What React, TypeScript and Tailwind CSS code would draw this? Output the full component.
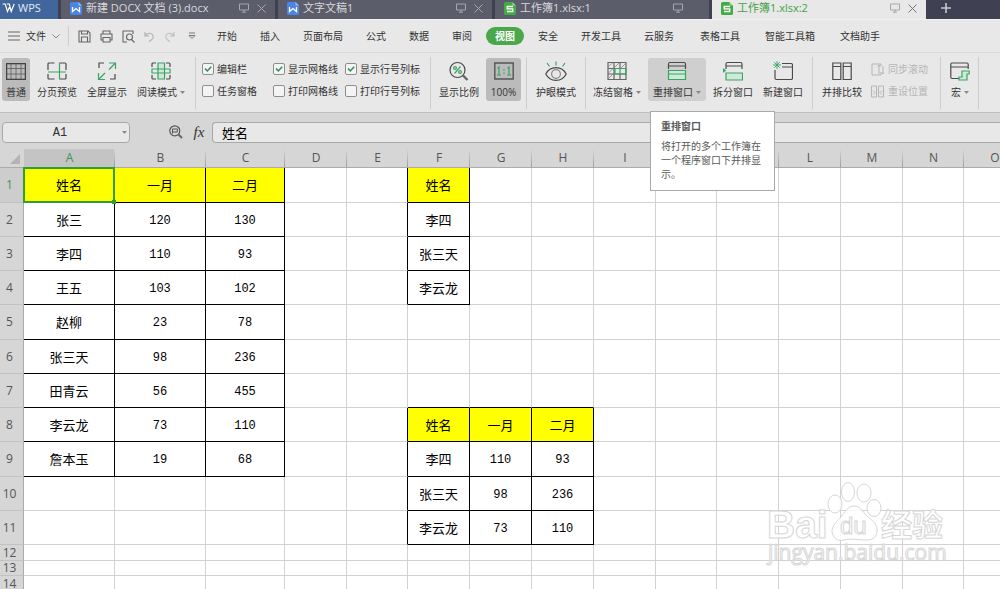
import { useState, ReactNode } from 'react';

const ui = "font-['Open_Sans','Noto_Sans_CJK_SC',sans-serif]";

const docTabs = [
  { title: '新建 DOCX 文档 (3).docx', kind: 'doc', closable: true },
  { title: '文字文稿1', kind: 'doc', closable: true },
  { title: '工作簿1.xlsx:1', kind: 'sheet', closable: false },
  { title: '工作簿1.xlsx:2', kind: 'sheet', closable: true },
];

const menus = ['开始', '插入', '页面布局', '公式', '数据', '审阅', '视图', '安全', '开发工具', '云服务'];
const toolMenus = ['表格工具', '智能工具箱', '文档助手'];

const checks = [
  { label: '编辑栏', on: true },
  { label: '显示网格线', on: true },
  { label: '显示行号列标', on: true },
  { label: '任务窗格', on: false },
  { label: '打印网格线', on: false },
  { label: '打印行号列标', on: false },
];

const cols = [
  { name: 'A', w: 'w-[91px]' },
  { name: 'B', w: 'w-[91px]' },
  { name: 'C', w: 'w-[79px]' },
  { name: 'D', w: 'w-[62px]' },
  { name: 'E', w: 'w-[61px]' },
  { name: 'F', w: 'w-[62px]' },
  { name: 'G', w: 'w-[62px]' },
  { name: 'H', w: 'w-[62px]' },
  { name: 'I', w: 'w-[62px]' },
  { name: 'J', w: 'w-[61px]' },
  { name: 'K', w: 'w-[62px]' },
  { name: 'L', w: 'w-[62px]' },
  { name: 'M', w: 'w-[62px]' },
  { name: 'N', w: 'w-[61px]' },
  { name: 'O', w: 'w-[62px]' },
];

const rows = [
  { h: 'h-[35px]', cells: ['姓名', '一月', '二月', '', '', '姓名'] },
  { h: 'h-[34px]', cells: ['张三', '120', '130', '', '', '李四'] },
  { h: 'h-[34px]', cells: ['李四', '110', '93', '', '', '张三天'] },
  { h: 'h-[34px]', cells: ['王五', '103', '102', '', '', '李云龙'] },
  { h: 'h-[35px]', cells: ['赵柳', '23', '78'] },
  { h: 'h-[34px]', cells: ['张三天', '98', '236'] },
  { h: 'h-[34px]', cells: ['田青云', '56', '455'] },
  { h: 'h-[34px]', cells: ['李云龙', '73', '110', '', '', '姓名', '一月', '二月'] },
  { h: 'h-[35px]', cells: ['詹本玉', '19', '68', '', '', '李四', '110', '93'] },
  { h: 'h-[34px]', cells: ['', '', '', '', '', '张三天', '98', '236'] },
  { h: 'h-[34px]', cells: ['', '', '', '', '', '李云龙', '73', '110'] },
  { h: 'h-[16px]', cells: [] },
  { h: 'h-[15px]', cells: [] },
  { h: 'h-[16px]', cells: [] },
];

const valueAt = (r: number, c: number) => rows[r]?.cells[c] || '';
const isHead = (r: number, c: number) => ['姓名', '一月', '二月'].includes(valueAt(r, c));

function Icon({ children, className = 'w-5 h-5', box = '0 0 20 20' }: { children: ReactNode; className?: string; box?: string }) {
  return (
    <svg className={`shrink-0 ${className}`} viewBox={box} fill="none" stroke="#4a4a4a" strokeWidth="1.2" aria-hidden="true">
      {children}
    </svg>
  );
}

function Caret() {
  return <svg className="w-[5px] h-[3px] shrink-0" viewBox="0 0 5 3" aria-hidden="true"><path d="M0 0h5L2.5 3z" fill="#888" /></svg>;
}

function Monitor() {
  return (
    <Icon className="w-[10px] h-[10px]" box="0 0 10 10">
      <path d="M.5 1h9v6h-9zM5 7v2M3 9.2h4" stroke="#a5a6af" strokeWidth="1" />
    </Icon>
  );
}

function DocIcon({ kind }: { kind: string }) {
  return (
    <svg className="w-3 h-[13px] shrink-0" viewBox="0 0 12 13" fill="none" aria-hidden="true">
      <path d="M1.500 0h7L12 3.500v8A1.500 1.500 0 0 1 10.500 13h-9A1.500 1.500 0 0 1 0 11.500v-10A1.500 1.500 0 0 1 1.500 0z" fill={kind === 'doc' ? '#4a84e6' : '#43ab46'} />
      <path d="M8.500 0 12 3.500H8.500z" fill="#fff" opacity=".45" />
      {kind === 'doc'
        ? <path d="M2.500 5v4.500L6 6.500l3.500 3V5" stroke="#fff" strokeWidth="1.300" />
        : <path d="M9 4.500H3.200v2.300H8.800v2.700H3" stroke="#fff" strokeWidth="1.300" />}
    </svg>
  );
}

function RibbonButton({ label, width, icon, caret, state, children }: { label: string; width: string; icon: ReactNode; caret?: boolean; state?: 'on' | 'hover'; children?: ReactNode }) {
  const bg = state === 'on' ? 'bg-[#bbbbbb]' : state === 'hover' ? 'bg-[#cfcfcf]' : '';
  return (
    <div className={`relative shrink-0 h-[43px] ${width}`}>
      <button type="button" className={`w-full h-full pt-[3px] rounded-[3px] flex flex-col items-center gap-1 ${bg}`}>
        {icon}
        <span className="flex items-center gap-[3px] leading-[14px] whitespace-nowrap">{label}{caret && <Caret />}</span>
      </button>
      {children}
    </div>
  );
}

function Group({ children, className = '' }: { children: ReactNode; className?: string }) {
  return <div className={`flex shrink-0 gap-1 h-[52px] pt-px border-r border-[#cdcdcd] ${className}`}>{children}</div>;
}

function TitleBar() {
  return (
    <div className="flex h-5 border-b border-[#f2f2f2] bg-[#3f4152] text-[11px] leading-4 overflow-hidden">
      <button type="button" className="w-[58px] shrink-0 pl-[2px] pb-[3px] mr-[3px] bg-[#41669c] text-[#e3eaf4] flex items-center gap-[3px]">
        <Icon className="w-[13px] h-[10px]" box="0 0 13 10">
          <path d="M.5 1h2.700L5.500 8.500 8.200 2.500M4.800 1h2.500l1.900 7.500L12.200 1" stroke="#fff" />
        </Icon>
        WPS
      </button>
      {docTabs.map((t, i) => {
        const active = i === 3;
        return (
          <div key={t.title} className={`w-[214px] shrink-0 pl-[9px] pr-[9px] pb-[3px] flex items-center ${active ? 'bg-[#e8e8e8] text-[#43a047]' : 'mr-[3px] bg-[#5c5d6a] text-[#d9d9de]'}`}>
            <DocIcon kind={t.kind} />
            <button type="button" className="flex-1 pl-1 text-left whitespace-nowrap">{t.title}</button>
            <Monitor />
            <span className="w-[9px] ml-2 flex">
              {t.closable && (
                <button type="button" aria-label="关闭">
                  <Icon className="w-[9px] h-[9px]" box="0 0 9 9"><path d="M.5.5l8 8M8.500.5l-8 8" stroke={active ? '#777' : '#a5a6af'} strokeWidth="1" /></Icon>
                </button>
              )}
            </span>
          </div>
        );
      })}
      <button type="button" aria-label="新建" className="ml-[15px] pb-[3px]">
        <Icon className="w-[10px] h-[10px]" box="0 0 10 10"><path d="M5 0v10M0 5h10" stroke="#c6c7ce" strokeWidth="1.600" /></Icon>
      </button>
    </div>
  );
}

function MenuBar({ active, onPick }: { active: string; onPick: (m: string) => void }) {
  return (
    <nav className="flex items-center h-[33px] pl-2 border-b border-[#dadada] whitespace-nowrap">
      <button type="button" className="flex items-center gap-[6px] h-5 pr-2 mr-[9px] border-r border-[#cdcdcd]">
        <Icon className="w-3 h-3" box="0 0 12 12"><path d="M0 2h12M0 6h12M0 10h12" stroke="#666" strokeWidth="1" /></Icon>
        文件
        <Icon className="w-2 h-2" box="0 0 8 8"><path d="M.5 2.500 4 6l3.500-3.500" stroke="#888" strokeWidth="1" /></Icon>
      </button>
      <div className="flex items-center gap-[9px] w-[139px]">
        <button type="button" aria-label="保存"><Icon className="w-[13px] h-[13px]" box="0 0 13 13"><path d="M1 1h9l2 2v9H1zM3.500 1v3h6V1M3.500 12V7h6v5" stroke="#666" strokeWidth="1.100" /></Icon></button>
        <button type="button" aria-label="打印"><Icon className="w-[13px] h-[13px]" box="0 0 13 13"><path d="M3 4V1h7v3M3 10H1V4h11v6h-2M3 7.500h7V12H3z" stroke="#666" strokeWidth="1.100" /></Icon></button>
        <button type="button" aria-label="打印预览"><Icon className="w-[13px] h-[13px]" box="0 0 13 13"><path d="M5 12H1V1h10v3M9.500 9.500l3 3" stroke="#666" strokeWidth="1.100" /><circle cx="7.500" cy="7" r="3" stroke="#666" strokeWidth="1.100" /></Icon></button>
        <button type="button" aria-label="撤销"><Icon className="w-[11px] h-[11px]" box="0 0 11 11"><path d="M1 1v4h4M1.200 5C3 1.500 8 1.500 9 4.500c.8 2.500-1 4.500-4 6" stroke="#b0b0b0" strokeWidth="1.100" /></Icon></button>
        <button type="button" aria-label="恢复"><Icon className="w-[11px] h-[11px]" box="0 0 11 11"><path d="M10 1v4H6M9.800 5C8 1.500 3 1.500 2 4.500c-.8 2.500 1 4.500 4 6" stroke="#bcbcbc" strokeWidth="1.100" /></Icon></button>
        <button type="button" aria-label="更多" className="pl-1"><Icon className="w-2 h-2" box="0 0 8 8"><path d="M1 1h6M1 3.500h6L4 6.500z" stroke="#777" strokeWidth="1" /></Icon></button>
      </div>
      <div className="flex items-center gap-[23px]">
        {menus.map(m => (
          <button key={m} type="button" onClick={() => onPick(m)}
            className={m === active ? 'h-[18px] px-[9px] -mx-[9px] rounded-full bg-[#4aa84b] text-white font-bold' : ''}>
            {m}
          </button>
        ))}
      </div>
      <div className="flex items-center gap-[25px] ml-[26px]">
        {toolMenus.map(m => <button key={m} type="button" onClick={() => onPick(m)}>{m}</button>)}
      </div>
    </nav>
  );
}

const green = '#3aa564';
const pale = '#cfe9d8';

function Ribbon() {
  return (
    <div className="flex pt-1 h-[60px] border-b border-[#bfbfbf]">
      <Group className="pl-[2px] pr-[7px]">
        <RibbonButton label="普通" width="w-7" state="on" icon={<Icon><path d="M.6 2.600h18.800v15.800H.6zM.6 7.500h18.800M.6 13h18.800M5 2.600v15.800M10 2.600v15.800M15 2.600v15.800" stroke="#666" strokeWidth=".9" /><path d="M.6 2.600h18.800v15.800H.6z" stroke="#444" /></Icon>} />
        <RibbonButton label="分页预览" width="w-[46px]" icon={<Icon><path d="M7.500 2H2Q1 2 1 3v6M1 13v4q0 1 1 1h5.500M13 2h5q1 0 1 1v6M19 13v4q0 1-1 1h-5" /><path d="M12.500 1.500v17M1 11h18" stroke={green} strokeWidth="1.200" /></Icon>} />
        <RibbonButton label="全屏显示" width="w-[46px]" icon={<Icon><path d="M7 2H2v5M18 13v5h-5" /><path d="M12 2h6.500v6M18 2.500l-6 6M1.500 12v6.500H8M2 18l6-6" stroke={green} /></Icon>} />
        <RibbonButton label="阅读模式" width="w-[54px]" caret icon={<Icon><path d="M5 2H2Q1 2 1 3v3M1 14v3q0 1 1 1h3M15 2h3q1 0 1 1v3M19 14v3q0 1-1 1h-3" /><path d="M7 2h6.500v16H7z" fill={pale} stroke={green} /><path d="M1 8h18v4H1z" stroke={green} /></Icon>} />
      </Group>
      <Group className="pl-[6px]">
        <div className="grid grid-cols-[71px_72px_85px] h-11 content-between">
          {checks.map(c => (
            <label key={c.label} className="flex items-center gap-[3px] h-[22px] whitespace-nowrap">
              <span className="relative w-3 h-3 shrink-0">
                <input type="checkbox" defaultChecked={c.on} className="peer block appearance-none w-3 h-3 border border-[#8e8e8e] rounded-[2px] bg-[#f4f4f4]" />
                <svg className="absolute inset-0 w-3 h-3 hidden peer-checked:block pointer-events-none" viewBox="0 0 12 12" fill="none"><path d="M3 5.500 5.300 8 9.200 3.800" stroke="#2f8f57" strokeWidth="1.500" /></svg>
              </span>
              {c.label}
            </label>
          ))}
        </div>
      </Group>
      <Group className="pl-[5px] pr-[5px]">
        <RibbonButton label="显示比例" width="w-[46px]" icon={<Icon><circle cx="8.500" cy="9" r="7.500" /><path d="M14 14.500l4.500 4.500" strokeWidth="2.400" stroke="#666" /><path d="M11.500 5.500l-6 7" stroke={green} /><circle cx="6" cy="7" r="1.400" stroke={green} /><circle cx="11" cy="11" r="1.400" stroke={green} /></Icon>} />
        <RibbonButton label="100%" width="w-[35px]" state="on" icon={<Icon><path d="M.8 2h18.400v16H.8z" stroke="#555" strokeWidth="1.400" /><path d="M3.500 7.200 5 6v8M3 14h4M13.500 7.200 15 6v8M13 14h4M10 8v1.500M10 11.500V13" stroke={green} /></Icon>} />
      </Group>
      <Group className="px-[6px]">
        <RibbonButton label="护眼模式" width="w-[46px]" icon={<Icon className="w-[22px] h-5" box="0 0 22 20"><path d="M.8 13C5 4.500 17 4.500 21.200 13 17 21.500 5 21.500.8 13z" /><circle cx="11" cy="13" r="4.400" stroke="#888" /><path d="M11 .5v4M2 2l2.500 3.500M20 2l-2.500 3.500" stroke={green} /></Icon>} />
      </Group>
      <Group className="pl-1 pr-[6px]">
        <RibbonButton label="冻结窗格" width="w-[54px]" caret icon={<Icon><path d="M1 1.500h18v17H1zM1 7.500h18M1 13h18M7 1.500v17M13 1.500v6M13 13v5.500" stroke="#666" /><path d="M1 6l5-4.500M7 7l5-5M14 7l5-5M1 12.500l5-5M1 18l5-5" stroke="#888" strokeWidth=".8" /><path d="M8 7.500h11V13H8zM13 7.500V13" stroke={green} /></Icon>} />
        <RibbonButton label="重排窗口" width="w-[58px]" caret state="hover" icon={<Icon><path d="M1.500 8V3q0-1.500 1.500-1.500h14q1.500 0 1.500 1.500v5M1.500 5h17" /><path d="M1.500 9.500h17v9h-17zM1.500 13h17" stroke={green} fill={pale} /></Icon>}>
          <div role="tooltip" className="absolute z-20 left-[2px] top-[53px] w-[125px] h-20 pl-[10px] pt-[6px] bg-white border border-[#a9a9a9] text-[#595959]">
            <p className="font-bold leading-4 mb-[5px]">重排窗口</p>
            <p className="w-[104px] leading-[14px]">将打开的多个工作簿在一个程序窗口下并排显示。</p>
          </div>
        </RibbonButton>
        <RibbonButton label="拆分窗口" width="w-[46px]" icon={<Icon><path d="M3 8V3q0-1.500 1.500-1.500h13q1.500 0 1.500 1.500v5M3 5h16" /><path d="M3 12h16.500v7H3z" stroke={green} fill={pale} /><path d="M0 7.500v4L3 9.500z" fill={green} stroke={green} strokeWidth=".5" /></Icon>} />
        <RibbonButton label="新建窗口" width="w-[46px]" icon={<Icon><path d="M9 2.500h9q1.500 0 1.500 1.500v13q0 1.500-1.500 1.500H3.500Q2 18.500 2 17V9M9 6h10" /><path d="M4 0v8M0 4h8M1.200 1.200l5.600 5.600M6.800 1.200 1.200 6.800" stroke={green} strokeWidth=".9" /></Icon>} />
      </Group>
      <Group className="pl-[6px] pr-3">
        <RibbonButton label="并排比较" width="w-[46px]" icon={<Icon><path d="M.8 2h8v16.500h-8zM11.200 2h8v16.500h-8zM.8 5.500h8M11.200 5.500h8" /></Icon>} />
        <div className="flex flex-col pl-[2px] text-[#b5b5b5] whitespace-nowrap">
          <button type="button" disabled className="flex items-center gap-1 h-[22px]">
            <Icon className="w-[13px] h-[13px]" box="0 0 13 13"><path d="M6 1H1v11h9V9M6 1h4v2M8 2v9M6.500 3.500 8 2l1.500 1.500M12 3v8M10.800 9.500 12 11l1-1.500" stroke="#b5b5b5" strokeWidth="1" /></Icon>
            同步滚动
          </button>
          <button type="button" disabled className="flex items-center gap-1 h-[22px]">
            <Icon className="w-[13px] h-[13px]" box="0 0 13 13"><path d="M.5 1h5v11h-5zM7.500 1h5v11h-5zM2 5.500l2 2-2 2M11 5.500l-2 2 2 2" stroke="#b5b5b5" strokeWidth="1" /></Icon>
            重设位置
          </button>
        </div>
      </Group>
      <Group className="pl-[6px] pr-[5px]">
        <RibbonButton label="宏" width="w-[26px]" caret icon={<Icon><path d="M10 17.500H2Q.8 17.500.8 16V3.500Q.8 2 2 2h15q1.200 0 1.200 1.500V8M.8 6h17.400" /><path d="M12 10h7.200v3H17v6H9v-3h3z" fill={pale} stroke={green} /></Icon>} />
      </Group>
    </div>
  );
}

function FormulaBar() {
  return (
    <div className="flex items-center h-9 pt-[2px] pl-[2px] bg-[#d6d6d6] text-[#333]">
      <div className="relative w-32 h-[21px] shrink-0 border border-[#a8a8a8] rounded-[4px] bg-[#e8e8e8]">
        <input aria-label="名称框" defaultValue="A1" className="block w-full h-full pt-[2px] pr-3 text-center text-[12px] font-['Liberation_Mono',monospace] bg-transparent outline-none" />
        <button type="button" aria-label="展开名称" className="absolute right-[2px] top-2 flex"><Caret /></button>
      </div>
      <button type="button" aria-label="浏览公式" className="ml-[39px]">
        <Icon className="w-[14px] h-[14px]" box="0 0 14 14"><circle cx="5.800" cy="5.800" r="5" stroke="#555" /><path d="M9.500 9.500 13 13" stroke="#666" strokeWidth="2" /><path d="M3.500 4h4.800v3H3.500zM3.500 8.500V4" stroke="#555" strokeWidth="1" /></Icon>
      </button>
      <button type="button" aria-label="插入函数" className="ml-[9px] w-[14px] text-[15px] leading-4 italic font-['Liberation_Serif',serif]">fx</button>
      <input aria-label="编辑栏" defaultValue="姓名" className="flex-1 min-w-0 h-[21px] ml-[6px] pl-[9px] text-[13px] text-black border border-r-0 border-[#a8a8a8] rounded-l-[4px] bg-[#e8e8e8] outline-none" />
    </div>
  );
}

function Sheet() {
  return (
    <table className="table-fixed w-px border-separate border-spacing-0 text-center text-[12px] leading-[14px]">
      <thead>
        <tr className="h-[19px] text-[#555]">
          <th className="relative w-6 p-0 bg-[#d6d6d6] border-b border-[#ababab]">
            <svg className="absolute left-[10px] top-[5px] w-[10px] h-[10px]" viewBox="0 0 10 10"><path d="M10 0v10H0z" fill="#b4b4b4" /></svg>
          </th>
          {cols.map((c, i) => (
            <th key={c.name} scope="col" className={`${c.w} relative p-0 font-normal border-b border-[#ababab] ${i === 0 ? 'bg-[#c4c4c4] text-[#3c9650]' : 'bg-[#d6d6d6]'}`}>
              {c.name}
              <span className="absolute right-0 inset-y-0 w-px bg-linear-to-b from-[#d6d6d6] to-[#9c9c9c]" />
            </th>
          ))}
        </tr>
      </thead>
      <tbody>
        {rows.map((row, r) => (
          <tr key={r} className={row.h}>
            <th scope="row" className={`${row.h} p-0 pr-1 font-normal border-b border-r border-b-[#c2c2c2] border-r-[#ababab] ${r === 0 ? 'bg-[#cdcdcd] text-[#3c9650]' : 'bg-[#d6d6d6] text-[#555]'}`}>{r + 1}</th>
            {cols.map((c, i) => {
              const v = valueAt(r, i);
              const right = v || valueAt(r, i + 1) ? 'border-r-black' : 'border-r-[#d2d2d2]';
              const bottom = v || valueAt(r + 1, i) ? 'border-b-black' : 'border-b-[#d2d2d2]';
              const font = /^\d+$/.test(v) ? "font-['Liberation_Mono',monospace] text-[12px] pt-[2px]" : 'text-[13px]';
              return (
                <td key={c.name} className={`relative p-0 border-r border-b text-black ${right} ${bottom} ${font} ${isHead(r, i) ? 'bg-[#ffff00]' : 'bg-white'}`}>
                  {v}
                  {r === 0 && i === 0 && (
                    <span className="absolute -inset-px border-2 border-[#2f9e35] z-10">
                      <span className="absolute -right-[3px] -bottom-[3px] w-1 h-1 bg-[#2f9e35]" />
                    </span>
                  )}
                </td>
              );
            })}
          </tr>
        ))}
      </tbody>
    </table>
  );
}

function Watermark() {
  return (
    <svg className="absolute right-[50px] top-[330px] w-[184px] h-[88px] pointer-events-none" viewBox="0 0 184 88" fill="#fff" fillOpacity=".85" stroke="#d6d6d6" strokeWidth="1">
      <ellipse cx="69" cy="25" rx="7" ry="9" />
      <ellipse cx="82" cy="13" rx="6.500" ry="9.500" />
      <ellipse cx="98" cy="14" rx="7" ry="9" />
      <ellipse cx="108" cy="29" rx="7" ry="8.500" />
      <path d="M88 27c6 0 8 5 13 10 6 5 11 9 10 16s-6 8-11 8-16-2-22 0-11-2-12-8c0-7 5-11 9-15 4-5 7-11 13-11z" />
      <text x="1" y="59" fontSize="39" fontWeight="700" fontFamily="Liberation Sans">Bai</text>
      <text x="74" y="55" fontSize="24" fontFamily="Liberation Sans">du</text>
      <text x="115" y="57" fontSize="31" fontWeight="700" fontFamily="Noto Sans CJK SC">经验</text>
      <text x="2" y="81" fontSize="21" fontFamily="Open Sans">jingyan.baidu.com</text>
    </svg>
  );
}

export default function App() {
  const [menu, setMenu] = useState('视图');

  return (
    <div className={`h-screen flex flex-col overflow-hidden bg-[#e8e8e8] text-[10px] leading-[14px] text-[#333] ${ui}`}>
      <TitleBar />
      <MenuBar active={menu} onPick={setMenu} />
      <Ribbon />
      <FormulaBar />
      <main className="relative flex-1 min-h-0 overflow-hidden bg-white">
        <Sheet />
        <Watermark />
      </main>
    </div>
  );
}
